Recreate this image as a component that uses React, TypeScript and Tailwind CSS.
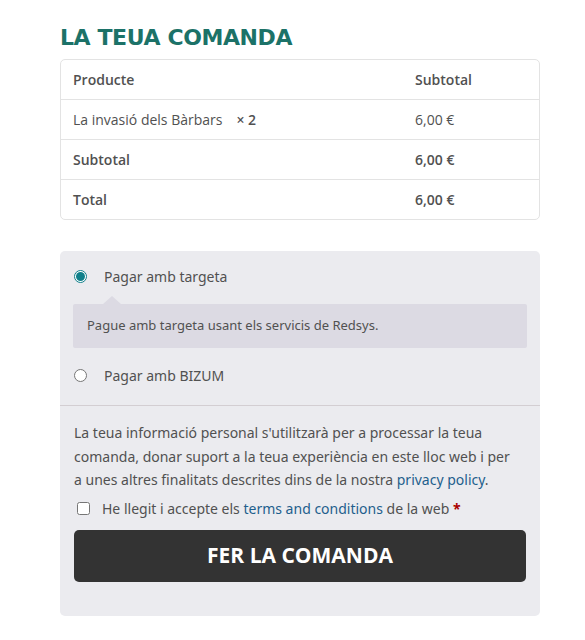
import React, { useState } from "react";

const rows = [
  { label: "La invasió dels Bàrbars", qty: "× 2", value: "6,00 €" },
];

export default function App() {
  const [method, setMethod] = useState<string>("card");
  const [accepted, setAccepted] = useState(false);

  return (
    <div className="min-h-[640px] w-[585px] bg-white pl-[60px] pr-[45px] pt-[26px] text-[#515151] [font-family:'Open_Sans','Noto_Sans',sans-serif]">
      <h3 className="text-[22px] leading-[24px] font-extrabold uppercase text-[#1c7268] mb-[9px] [font-family:'DejaVu_Sans',sans-serif] tracking-[-0.4px]">
        La teua comanda
      </h3>

      {/* ORDER TABLE */}
      <div className="border border-[#e3e3e3] rounded-[5px] text-[14px]">
        <div className="flex h-[40px] items-center border-b border-[#e3e3e3] font-semibold">
          <span className="pl-[12px] w-[354px]">Producte</span>
          <span>Subtotal</span>
        </div>
        {rows.map((r) => (
          <div
            key={r.label}
            className="flex h-[40px] items-center border-b border-[#e3e3e3]"
          >
            <span className="pl-[12px] w-[354px]">
              {r.label}
              <strong className="font-semibold ml-[14px]">{r.qty}</strong>
            </span>
            <span>{r.value}</span>
          </div>
        ))}
        <div className="flex h-[40px] items-center border-b border-[#e3e3e3] font-semibold">
          <span className="pl-[12px] w-[354px]">Subtotal</span>
          <span>6,00 €</span>
        </div>
        <div className="flex h-[39px] items-center font-semibold">
          <span className="pl-[12px] w-[354px]">Total</span>
          <span>6,00 €</span>
        </div>
      </div>

      {/* PAYMENT */}
      <div className="mt-[31px] bg-[#ebebef] rounded-[5px] h-[365px] text-[14px] [font-family:'Noto_Sans',sans-serif]">
        <div className="px-[13px] pt-[14px] pb-[19px] border-b border-[#d3ced2]">
          <label
            className="flex items-center h-[22px] cursor-pointer"
            onClick={() => setMethod("card")}
          >
            <Radio checked={method === "card"} />
            <span className="ml-[17px] text-[14px]">Pagar amb targeta</span>
          </label>

          <div className="relative mt-[17px] bg-[#dcdae3] rounded-[2px] h-[44px] flex items-center pl-[14px] text-[13px]">
            <span className="absolute -top-[8px] left-[30px] w-0 h-0 border-l-[9px] border-r-[9px] border-b-[8px] border-l-transparent border-r-transparent border-b-[#dcdae3]" />
            Pague amb targeta usant els servicis de Redsys.
          </div>

          <label
            className="flex items-center h-[22px] mt-[16px] cursor-pointer"
            onClick={() => setMethod("bizum")}
          >
            <Radio checked={method === "bizum"} />
            <span className="ml-[17px]">Pagar amb BIZUM</span>
          </label>
        </div>

        <div className="px-[14px] pt-[15px]">
          <p className="leading-[23.5px] text-[14px] w-[440px]">
            La teua informació personal s'utilitzarà per a processar la teua
            comanda, donar suport a la teua experiència en este lloc web i per
            a unes altres finalitats descrites dins de la nostra{" "}
            <a className="text-[#1e5f8d]" href="#">
              privacy policy
            </a>
            .
          </p>

          <label className="flex items-center mt-[7px] h-[20px] pl-[3px] cursor-pointer">
            <input
              type="checkbox"
              checked={accepted}
              onChange={(e) => setAccepted(e.target.checked)}
              className="w-[13px] h-[13px] accent-[#1c7268]"
            />
            <span className="ml-[12px]">
              He llegit i accepte els{" "}
              <a className="text-[#1e5f8d]" href="#">
                terms and conditions
              </a>{" "}
              de la web <span className="text-[#a00] font-bold">*</span>
            </span>
          </label>

          <button className="mt-[11px] w-full h-[52px] bg-[#333333] rounded-[5px] text-white text-[21px] font-bold uppercase [font-family:'Open_Sans',sans-serif]">
            Fer la comanda
          </button>
        </div>
      </div>
    </div>
  );
}

function Radio({ checked }: { checked: boolean }) {
  return (
    <span
      className={
        checked
          ? "ml-[1px] w-[13px] h-[13px] rounded-full border-[1px] border-[#0e7f8a] flex items-center justify-center bg-white"
          : "ml-[1px] w-[13px] h-[13px] rounded-full border-[1px] border-[#767676] bg-white"
      }
    >
      {checked && <span className="w-[9px] h-[9px] rounded-full bg-[#0e7f8a]" />}
    </span>
  );
}
